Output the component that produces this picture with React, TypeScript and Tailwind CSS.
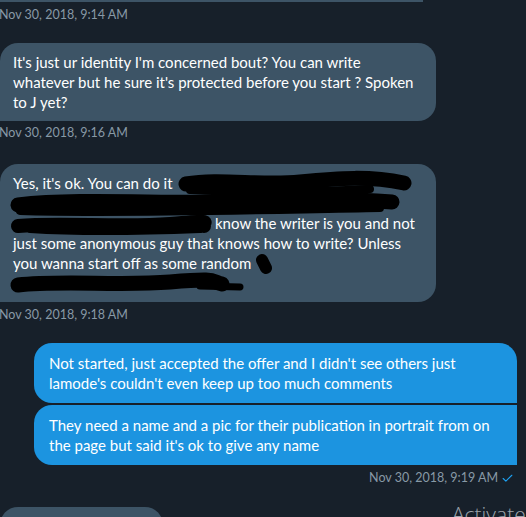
import { Check } from "lucide-react";

const Stamp = ({ text, right }: { text: string; right?: boolean }) => (
  <div
    className={`h-[18px] text-[12.5px] leading-[18px] text-[#8899a6] flex items-center gap-[3px] ${
      right ? "justify-end pr-[12px]" : "-ml-[1px]"
    }`}
  >
    <span>{text}</span>
    {right && <Check className="size-[13px] text-[#1da1f2]" strokeWidth={2} />}
  </div>
);

const Redactions = () => (
  <svg
    className="absolute inset-0 pointer-events-none"
    width="436"
    height="138"
    viewBox="0 0 436 138"
  >
    <g fill="none" stroke="#000" strokeLinecap="round" strokeLinejoin="round">
      <path d="M186 20 C 220 14, 260 22, 300 18 S 370 12, 404 19" strokeWidth="15" />
      <path d="M190 26 C 240 29, 300 28, 370 25" strokeWidth="8" />
      <path d="M18 41 C 80 34, 160 40, 230 38 S 340 34, 392 38" strokeWidth="15" />
      <path d="M20 47 C 120 50, 260 46, 380 44" strokeWidth="8" />
      <path d="M18 62 C 60 58, 120 64, 170 60 S 200 58, 204 62" strokeWidth="14" />
      <path d="M30 66 C 90 70, 150 68, 200 66" strokeWidth="6" />
      <path d="M262 96 L 266 104" strokeWidth="12" />
      <path d="M18 121 C 60 116, 120 122, 170 118 S 210 117, 222 120" strokeWidth="15" />
      <path d="M200 122 L 240 123" strokeWidth="7" />
    </g>
  </svg>
);

export default function App() {
  return (
    <div className="relative w-[526px] h-[517px] overflow-hidden bg-[#17202a] font-['Lato','Liberation_Sans',sans-serif] text-[15px] leading-5 text-white">
      <div className="h-[2px] w-[423px] bg-[#3d5466]" />
      <div className="mt-[4px]">
        <Stamp text="Nov 30, 2018, 9:14 AM" />
      </div>

      <div className="mt-[19px] w-[436px] rounded-[18px] rounded-bl-none bg-[#3d5466] pl-[13px] py-[9px] whitespace-nowrap">
        <div>It's just ur identity I'm concerned bout? You can write</div>
        <div>whatever but he sure it's protected before you start ? Spoken</div>
        <div>to J yet?</div>
      </div>
      <div className="mt-[3px]">
        <Stamp text="Nov 30, 2018, 9:16 AM" />
      </div>

      <div className="relative mt-[22px] w-[436px] h-[138px] rounded-[18px] rounded-bl-none bg-[#3d5466] pl-[13px] py-[9px] whitespace-nowrap">
        <div>Yes, it's ok. You can do it</div>
        <div className="h-5" />
        <div className="pl-[202px]">know the writer is you and not</div>
        <div>just some anonymous guy that knows how to write? Unless</div>
        <div>you wanna start off as some random</div>
        <div className="h-5" />
        <Redactions />
      </div>
      <div className="mt-[4px]">
        <Stamp text="Nov 30, 2018, 9:18 AM" />
      </div>

      <div className="mt-[19px] flex flex-col items-end gap-[2px] pr-[9px]">
        <div className="w-[483px] h-[60px] rounded-[18px] rounded-br-none bg-[#1c94e0] pl-[15px] py-[10px] whitespace-nowrap">
          <div>Not started, just accepted the offer and I didn't see others just</div>
          <div>lamode's couldn't even keep up too much comments</div>
        </div>
        <div className="w-[483px] h-[60px] rounded-[18px] rounded-r-none bg-[#1c94e0] pl-[15px] py-[10px] whitespace-nowrap">
          <div>They need a name and a pic for their publication in portrait from on</div>
          <div>the page but said it's ok to give any name</div>
        </div>
      </div>
      <div className="mt-[4px]">
        <Stamp text="Nov 30, 2018, 9:19 AM" right />
      </div>

      <div className="mt-[20px] w-[163px] h-[40px] rounded-t-[18px] bg-[#3d5466]" />

      <div className="absolute left-[452px] top-[501px] text-[21px] leading-[26px] text-[#9ba3ab] font-['Open_Sans',sans-serif] font-light">
        Activate
      </div>
    </div>
  );
}
